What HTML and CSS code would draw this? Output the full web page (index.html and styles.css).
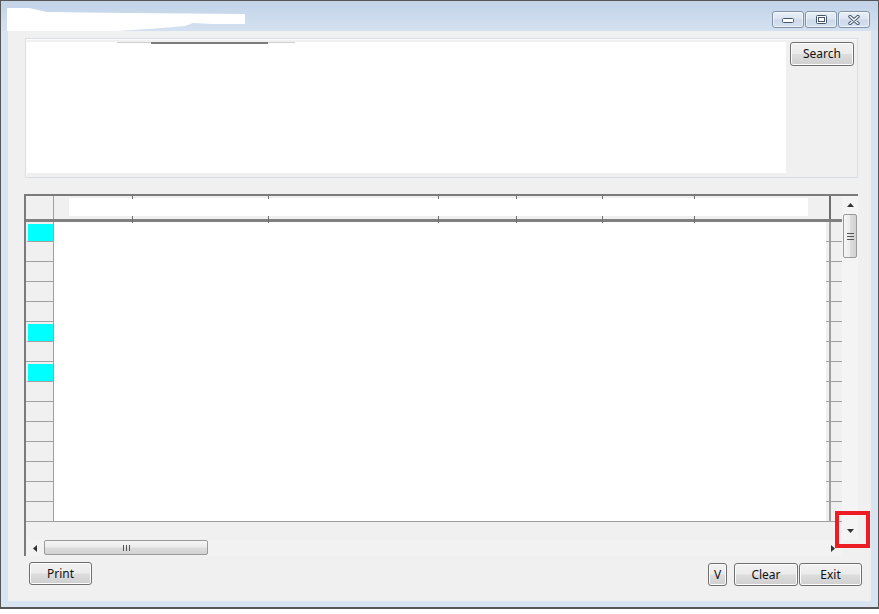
FILE: index.html
```html
<!DOCTYPE html>
<html>
<head>
<meta charset="utf-8">
<link rel="stylesheet" href="styles.css">
</head>
<body>
<div class="window">
  <div class="titlebar">
    <svg class="title-blob" width="240" height="25" viewBox="0 0 240 25"><polygon points="0,0 22,0 40,4 120,5 238,6 238,16 205,16 186,15 178,18 155,20 110,23 70,24 25,23 0,23" fill="#ffffff"/></svg>
    <div class="caps">
      <div class="cbtn"><svg width="12" height="6" viewBox="0 0 12 6"><rect x="0.5" y="0.5" width="11" height="4" rx="1" fill="#fff" stroke="#46556d"/></svg></div>
      <div class="cbtn"><svg width="11" height="9" viewBox="0 0 11 9"><rect x="0.5" y="0.5" width="10" height="8" rx="1" fill="#fff" stroke="#46556d"/><rect x="2.5" y="2.5" width="6" height="4" fill="none" stroke="#46556d"/></svg></div>
      <div class="cbtn"><svg width="12" height="10" viewBox="0 0 12 10"><path d="M2 1.5 L10 8.5 M10 1.5 L2 8.5" stroke="#46556d" stroke-width="3.4" stroke-linecap="round"/><path d="M2 1.5 L10 8.5 M10 1.5 L2 8.5" stroke="#ffffff" stroke-width="1.4" stroke-linecap="round"/></svg></div>
    </div>
  </div>
  <div class="client">
    <div class="panel">
      <div class="input-area">
        <div class="deco"><span class="deco-light"></span><span class="deco-dark"></span><span class="deco-light short"></span></div>
      </div>
      <button class="btn search">Search</button>
    </div>

    <div class="grid">
      <div class="main">
        <div class="ghead">
          <div class="corner"></div>
          <div class="hcols">
            <div class="hcol c1"></div>
            <div class="hcol c2"></div>
            <div class="hcol c3"></div>
            <div class="hcol c4"></div>
            <div class="hcol c5"></div>
            <div class="hcol c6"></div>
            <div class="hcol c7"></div>
          </div>
          <div class="hend"></div>
        </div>
        <div class="gbody">
          <div class="rowheads">
            <div class="rh sel"></div><div class="rh"></div><div class="rh"></div><div class="rh"></div><div class="rh"></div>
            <div class="rh sel"></div><div class="rh"></div><div class="rh sel"></div><div class="rh"></div><div class="rh"></div>
            <div class="rh"></div><div class="rh"></div><div class="rh"></div><div class="rh"></div><div class="rh"></div>
          </div>
          <div class="cells"></div>
          <div class="rstrip">
            <div class="rs"></div><div class="rs"></div><div class="rs"></div><div class="rs"></div><div class="rs"></div>
            <div class="rs"></div><div class="rs"></div><div class="rs"></div><div class="rs"></div><div class="rs"></div>
            <div class="rs"></div><div class="rs"></div><div class="rs"></div><div class="rs"></div><div class="rs"></div>
          </div>
        </div>
        <div class="gspacer"></div>
        <div class="hscroll">
          <div class="sbtn-h"><svg width="4" height="7" viewBox="0 0 4 7"><polygon points="4,0 4,7 0,3.5" fill="#333"/></svg></div>
          <div class="hthumb"><svg width="7" height="6" viewBox="0 0 7 6"><path d="M0.5 0v6M3.5 0v6M6.5 0v6" stroke="#555" stroke-width="1"/></svg></div>
          <div class="htrack"></div>
          <div class="sbtn-h right"><svg width="4" height="7" viewBox="0 0 4 7"><polygon points="0,0 0,7 4,3.5" fill="#333"/></svg></div>
        </div>
      </div>
      <div class="vscroll">
        <div class="sbtn-v"><svg width="7" height="4" viewBox="0 0 7 4"><polygon points="0,4 7,4 3.5,0" fill="#333"/></svg></div>
        <div class="vthumb"><svg width="7" height="7" viewBox="0 0 7 7"><path d="M0 0.5h7M0 3.5h7M0 6.5h7" stroke="#555" stroke-width="1"/></svg></div>
        <div class="vtrack"></div>
        <div class="sbtn-v down"><svg width="7" height="4" viewBox="0 0 7 4"><polygon points="0,0 7,0 3.5,4" fill="#333"/></svg></div>
      </div>
      <div class="gcorner"></div>
    </div>

    <div class="footer">
      <button class="btn print">Print</button>
      <button class="btn vbtn">V</button>
      <button class="btn clear">Clear</button>
      <button class="btn exit">Exit</button>
    </div>
  </div>
  <div class="redbox"></div>
</div>
</body>
</html>
```

FILE: styles.css
```css
* { box-sizing: border-box; }

body {
  margin: 0;
  background: #ffffff;
  font-family: "Noto Sans", "Open Sans", sans-serif;
  font-size: 12px;
}

.window {
  position: relative;
  width: 879px;
  height: 609px;
  border: 1px solid #575757;
  border-bottom-width: 2px;
  background: #d8e4f2;
  display: flex;
  flex-direction: column;
}

.titlebar {
  height: 30px;
  flex: none;
  display: flex;
  align-items: flex-start;
  justify-content: space-between;
  padding: 0 8px 0 6px;
  background: linear-gradient(#c2d3e8, #d4e1f0);
}

.title-blob { margin-top: 7px; display: block; }

.caps {
  display: flex;
  gap: 1px;
  margin-top: 10px;
}

.cbtn {
  width: 32px;
  height: 17px;
  border: 1px solid #8393ab;
  border-radius: 3px;
  background: linear-gradient(#e9f0f8 0%, #dbe5f1 45%, #cdd9e9 55%, #d7e2ef 100%);
  box-shadow: inset 0 0 0 1px rgba(255,255,255,0.6);
  display: flex;
  align-items: center;
  justify-content: center;
}
.cbtn:first-child { align-items: flex-end; padding-bottom: 3px; }

.client {
  height: 570px;
  flex: none;
  margin: 0 7px;
  background: #f0f0f0;
  display: flex;
  flex-direction: column;
}

/* top group */
.panel {
  margin: 7px 0 0 17px;
  width: 833px;
  height: 140px;
  flex: none;
  border: 1px solid #d5dfe5;
  box-shadow: inset 1px 1px 0 #fbfbfb;
  display: flex;
  align-items: flex-start;
  gap: 4px;
  padding: 3px 3px 4px 1px;
}

.input-area {
  width: 759px;
  height: 131px;
  background: #ffffff;
}

.deco {
  display: flex;
  margin-left: 90px;
  height: 2px;
}
.deco-light { width: 34px; border-top: 1px solid #cfcfcf; }
.deco-light.short { width: 27px; }
.deco-dark { width: 117px; background: #7c7c7c; }

.btn {
  height: 23px;
  border: 1px solid #707070;
  border-radius: 3px;
  background: linear-gradient(#f2f2f2 0%, #ebebeb 48%, #dddddd 52%, #cfcfcf 100%);
  box-shadow: inset 0 0 0 1px #fcfcfc;
  font-family: "Noto Sans", "Open Sans", sans-serif;
  font-size: 12px;
  color: #111111;
  padding: 0;
  line-height: 20px;
}

.search { width: 64px; height: 24px; }

/* grid */
.grid {
  margin: 16px 0 0 16px;
  width: 834px;
  height: 362px;
  flex: none;
  border-top: 2px solid #7b7b7b;
  border-left: 2px solid #7b7b7b;
  display: grid;
  grid-template-columns: 816px 16px;
  grid-template-rows: 344px 16px;
}

.main {
  grid-column: 1;
  grid-row: 1 / 3;
  display: flex;
  flex-direction: column;
}

.ghead {
  height: 26px;
  flex: none;
  display: flex;
  border-bottom: 3px solid #808080;
  background: #f0f0f0;
}

.corner {
  width: 28px;
  border-right: 1px solid #a0a0a0;
}

.hcols {
  width: 775px;
  display: flex;
  background: linear-gradient(#ffffff, #ffffff) 15px 2px / 739px 18px no-repeat;
}

.hcol { position: relative; flex: none; }
.hcol::before,
.hcol::after {
  content: "";
  position: absolute;
  right: 0;
  width: 1px;
  background: #6f6f6f;
}
.hcol::before { top: 0; height: 3px; }
.hcol::after { top: 20px; height: 7px; }
.c1 { width: 79px; }
.c2 { width: 136px; }
.c3 { width: 170px; }
.c4 { width: 78px; }
.c5 { width: 86px; }
.c6 { width: 92px; }
.c7 { flex: 1; }
.c7::before, .c7::after { display: none; }

.hend {
  width: 13px;
  border-left: 2px solid #6d6d6d;
}

.gbody {
  height: 300px;
  flex: none;
  display: flex;
}

.rowheads {
  width: 28px;
  border-right: 1px solid #a0a0a0;
  background: #f0f0f0;
  display: flex;
  flex-direction: column;
}

.rh {
  height: 20px;
  flex: none;
  border-bottom: 1px solid #a0a0a0;
}
.rh.sel {
  background: #00ffff;
  border-top: 2px solid #f0f0f0;
  border-left: 2px solid #f0f0f0;
}

.cells {
  width: 772px;
  background: #ffffff;
  border-bottom: 1px solid #a0a0a0;
}

.rstrip {
  width: 16px;
  display: flex;
  flex-direction: column;
  background: linear-gradient(#a0a0a0, #a0a0a0) 3px 0 / 2px 100% no-repeat, #f0f0f0;
}
.rs {
  height: 20px;
  flex: none;
  border-bottom: 1px solid #a0a0a0;
}

.gspacer { height: 18px; flex: none; }

.hscroll {
  height: 16px;
  flex: none;
  display: flex;
  background: #f2f2f2;
}

.sbtn-h {
  width: 17px;
  display: flex;
  align-items: center;
  justify-content: center;
}
.sbtn-h.right { justify-content: flex-end; padding-right: 7px; }

.hthumb {
  width: 164px;
  height: 15px;
  margin-left: 1px;
  border: 1px solid #9a9a9a;
  border-radius: 2px;
  background: linear-gradient(#f6f6f6 0%, #ececec 45%, #dcdcdc 55%, #d2d2d2 100%);
  display: flex;
  align-items: center;
  justify-content: center;
}

.htrack { flex: 1; }

.vscroll {
  grid-column: 2;
  grid-row: 1;
  display: flex;
  flex-direction: column;
  background: #f4f4f4;
}

.sbtn-v {
  height: 17px;
  flex: none;
  display: flex;
  align-items: center;
  justify-content: center;
  padding-left: 1px;
}
.sbtn-v.down { height: 18px; }

.vthumb {
  height: 44px;
  flex: none;
  margin: 1px 1px 0 1px;
  border: 1px solid #9a9a9a;
  border-radius: 2px;
  background: linear-gradient(90deg, #f6f6f6 0%, #ececec 45%, #dcdcdc 55%, #d2d2d2 100%);
  display: flex;
  align-items: center;
  justify-content: center;
}

.vtrack { flex: 1; }

.gcorner {
  grid-column: 2;
  grid-row: 2;
  background: #f0f0f0;
}

/* footer */
.footer {
  height: 24px;
  flex: none;
  margin-top: 6px;
  display: flex;
  align-items: flex-end;
  padding: 0 9px 0 21px;
}

.print { width: 63px; align-self: flex-start; }
.vbtn { width: 19px; margin-left: auto; }
.clear { width: 64px; margin-left: 7px; }
.exit { width: 63px; margin-left: 1px; }

/* annotation overlay */
.redbox {
  position: absolute;
  left: 834px;
  top: 510px;
  width: 35px;
  height: 37px;
  border: 4px solid #ed1c24;
}
```
